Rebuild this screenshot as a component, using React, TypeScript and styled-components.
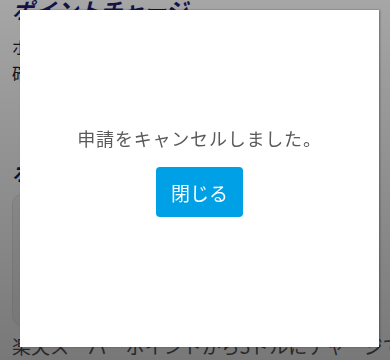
import React from "react";
import styled, { createGlobalStyle } from "styled-components";

const Global = createGlobalStyle`
  html, body { margin: 0; padding: 0; }
  body {
    background: #ffffff;
    font-family: "Noto Sans CJK JP", "Noto Sans", sans-serif;
    overflow: hidden;
  }
`;

const Page = styled.div`
  width: 390px;
  height: 360px;
  overflow: hidden;
  padding: 0 12px;
  box-sizing: border-box;
  display: flex;
  flex-direction: column;
`;

const Heading = styled.h2<{ $top: number }>`
  margin: ${(p) => p.$top}px 0 0 0;
  font-size: 22px;
  line-height: 26px;
  font-weight: 700;
  font-style: italic;
  color: #1c1c6e;
  white-space: nowrap;
`;

const Para = styled.p`
  margin: 12px 0 0 0;
  font-size: 17px;
  line-height: 26px;
  color: #222;
`;

const Card = styled.div`
  margin-top: 10px;
  height: 130px;
  border-radius: 10px;
  background: #f4f4f4;
  border: 1px solid #e6e6e6;
`;

const Bottom = styled.p`
  margin: 6px 0 0 0;
  font-size: 19px;
  line-height: 28px;
  color: #555;
  white-space: nowrap;
`;

const Overlay = styled.div`
  position: fixed;
  inset: 0;
  background: linear-gradient(
    to bottom,
    rgba(0, 0, 0, 0.35),
    rgba(0, 0, 0, 0.53)
  );
`;

const Dialog = styled.div`
  position: fixed;
  left: 20px;
  top: 10px;
  width: 359px;
  height: 337px;
  background: #ffffff;
  box-shadow: 1px 0 2px rgba(0, 0, 0, 0.35);
  display: flex;
  flex-direction: column;
  align-items: center;
  padding-top: 115px;
  box-sizing: border-box;
`;

const Message = styled.p`
  margin: 0;
  font-size: 18px;
  line-height: 26px;
  font-weight: 400;
  color: #5a5a5a;
  letter-spacing: 0.8px;
`;

const CloseButton = styled.button`
  margin-top: 16px;
  width: 87px;
  height: 50px;
  border: none;
  border-radius: 4px;
  background: #00a0e6;
  color: #ffffff;
  font-family: "Noto Sans CJK JP", sans-serif;
  font-size: 19px;
  font-weight: 400;
  cursor: pointer;
`;

export default function App() {
  return (
    <>
      <Global />
      <Page>
        <Heading $top={-4}>ポイントチャージ</Heading>
        <Para>
          ポイントをチャージすることができます。
          <br />
          確認してください。
        </Para>
        <Heading $top={72}>ポイント</Heading>
        <Card />
        <Bottom>楽天スーパーポイントから5ドルにチャージできます</Bottom>
      </Page>
      <Overlay />
      <Dialog role="dialog">
        <Message>申請をキャンセルしました。</Message>
        <CloseButton>閉じる</CloseButton>
      </Dialog>
    </>
  );
}
